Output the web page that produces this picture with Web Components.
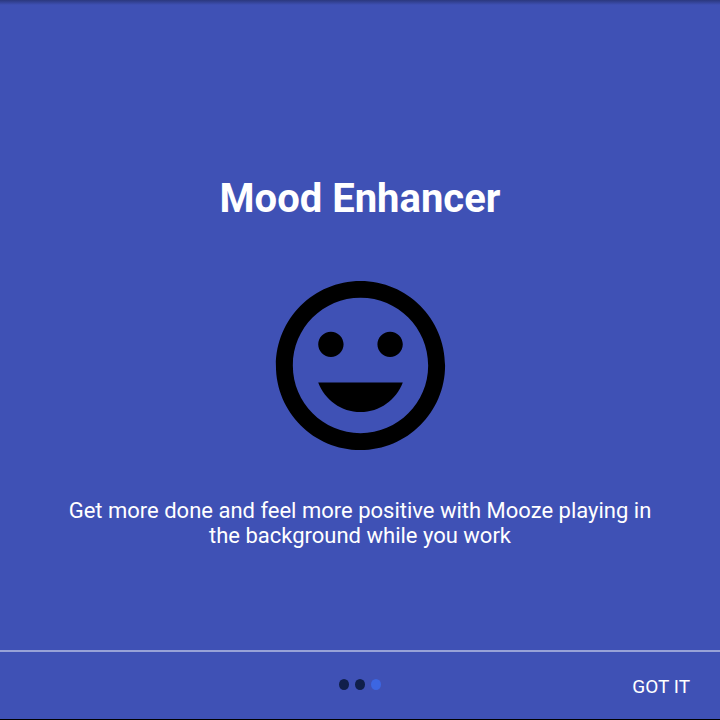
<!DOCTYPE html>
<html lang="en">
<head>
<meta charset="utf-8">
<title>Mood Enhancer</title>
<style>
html,body{height:100%}
body{margin:0;background:#3f51b5;font-family:Roboto,"Liberation Sans",sans-serif;color:#fff}
</style>
</head>
<body>
<intro-screen>
  <intro-slide>
    <span slot="title">Mood Enhancer</span>
    <mood-icon slot="image"></mood-icon>
    <span slot="description">Get more done and feel more positive with Mooze playing in the background while you work</span>
  </intro-slide>
  <intro-bar slot="footer" count="3" current="3">Got it</intro-bar>
</intro-screen>
<script>
class Base extends HTMLElement{
  connectedCallback(){ if(!this.shadowRoot) this.attachShadow({mode:"open"}).innerHTML=this.render(); }
}
customElements.define("intro-screen",class extends Base{
  render(){return `<style>
    :host{box-sizing:border-box;min-height:100vh;display:flex;flex-direction:column;background:linear-gradient(#2b387e,#3f51b5 5px);border-bottom:1px solid #000}
    main{flex:1;display:flex;flex-direction:column}
  </style><main><slot></slot></main><slot name="footer"></slot>`}
});
customElements.define("intro-slide",class extends Base{
  render(){return `<style>
    :host{flex:1;display:flex;flex-direction:column;align-items:center;text-align:center;padding:175px 64px 0}
    h1{margin:0;font-size:40px;line-height:48px;font-weight:700}
    .image{margin:41px 0 31px}
    p{margin:0;font-size:22px;line-height:25px}
  </style><h1><slot name="title"></slot></h1><div class="image"><slot name="image"></slot></div><p><slot name="description"></slot></p>`}
});
customElements.define("mood-icon",class extends Base{
  render(){return `<style>:host{display:block;width:203px;height:203px}svg{display:block;width:100%;height:100%}</style>
  <svg viewBox="0 0 24 24" role="img" aria-label="Smiling face"><path d="M11.99 2C6.47 2 2 6.48 2 12s4.47 10 9.99 10C17.52 22 22 17.52 22 12S17.52 2 11.99 2zM12 20c-4.42 0-8-3.58-8-8s3.58-8 8-8 8 3.58 8 8-3.58 8-8 8zM15.5 11c.83 0 1.5-.67 1.5-1.5S16.33 8 15.5 8 14 8.67 14 9.5s.67 1.5 1.5 1.5zM8.5 11c.83 0 1.5-.67 1.5-1.5S9.33 8 8.5 8 7 8.67 7 9.5 7.67 11 8.5 11zM7 14c.78 2.04 2.73 3.5 5 3.5s4.22-1.46 5-3.5z"/></svg>`}
});
customElements.define("intro-bar",class extends Base{
  render(){
    const n=+this.getAttribute("count"),c=+this.getAttribute("current");
    const dots=Array.from({length:n},(_,i)=>`<i${i+1===c?' class="on"':''}></i>`).join("");
    return `<style>
    :host{box-sizing:border-box;display:grid;grid-template-columns:1fr auto 1fr;align-items:center;height:69px;padding-bottom:3px;border-top:2px solid #98a2d7}
    .dots{grid-column:2;display:flex;gap:6px}
    i{width:10px;height:11px;border-radius:50%;background:#101f4a}
    i.on{background:#3c66e2}
    button{justify-self:end;margin:6px 24px 0 0;padding:6px;border:0;background:none;color:inherit;font:400 19px/24px Roboto,"Liberation Sans",sans-serif;text-transform:uppercase}
  </style><div class="dots">${dots}</div><button type="button"><slot></slot></button>`}
});
</script>
</body>
</html>
